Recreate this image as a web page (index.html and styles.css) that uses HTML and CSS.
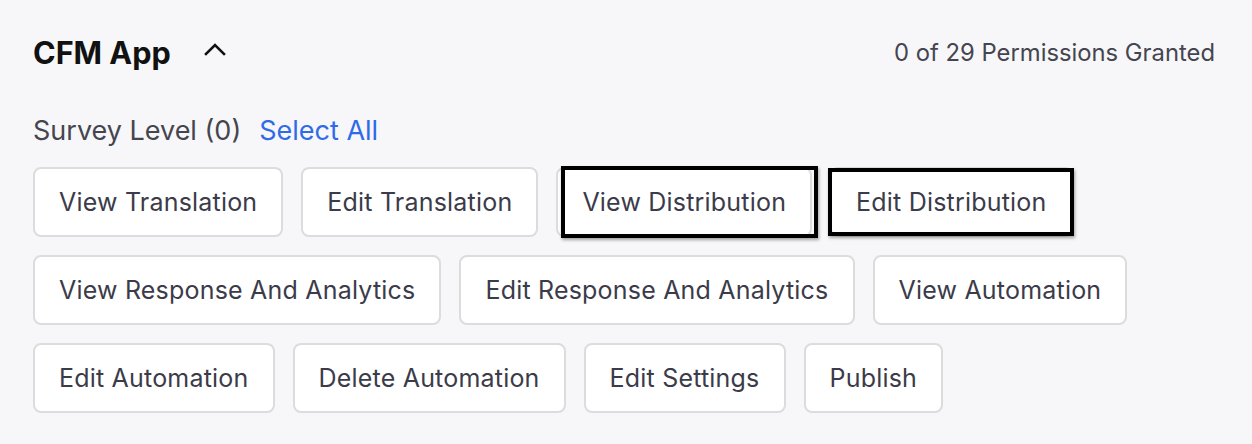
FILE: index.html
```html
<!DOCTYPE html>
<html>
<head>
<meta charset="utf-8">
<link rel="stylesheet" href="styles.css">
</head>
<body>
<section class="panel">
  <header class="panel-head">
    <div class="title-wrap">
      <h2 class="title">CFM App</h2>
      <svg class="chevron" width="24" height="16" viewBox="0 0 24 16"><path d="M3 13 L12 4 L21 13" fill="none" stroke="#111" stroke-width="2.6" stroke-linecap="square"/></svg>
    </div>
    <div class="granted">0 of 29 Permissions Granted</div>
  </header>
  <div class="level">
    <span class="level-label">Survey Level (0)</span>
    <a class="select-all">Select All</a>
  </div>
  <div class="perms">
    <button class="perm">View Translation</button>
    <button class="perm">Edit Translation</button>
    <button class="perm mark mark-a">View Distribution</button>
    <button class="perm mark mark-b">Edit Distribution</button>
    <button class="perm">View Response And Analytics</button>
    <button class="perm">Edit Response And Analytics</button>
    <button class="perm">View Automation</button>
    <button class="perm">Edit Automation</button>
    <button class="perm">Delete Automation</button>
    <button class="perm">Edit Settings</button>
    <button class="perm">Publish</button>
  </div>
</section>
</body>
</html>
```

FILE: styles.css
```css
html, body {
  margin: 0;
  padding: 0;
  background: #f7f7f9;
}
body {
  font-family: Inter, "Noto Sans", sans-serif;
  color: #3b3b4a;
}
.panel {
  padding: 22px 37px 0 33px;
}
.panel-head {
  display: flex;
  align-items: center;
  justify-content: space-between;
  height: 60px;
}
.title-wrap {
  display: flex;
  align-items: center;
  gap: 32px;
}
.title {
  margin: 0;
  font-size: 30.6px;
  font-weight: 700;
  color: #111111;
}
.chevron {
  display: block;
  margin-top: -6px;
}
.granted {
  font-size: 23.8px;
  color: #45454f;
}
.level {
  display: flex;
  align-items: center;
  gap: 18px;
  height: 36px;
  margin-top: 30px;
  font-size: 27px;
}
.level-label {
  color: #45454f;
}
.select-all {
  color: #2f6be8;
  cursor: pointer;
}
.perms {
  display: flex;
  flex-wrap: wrap;
  gap: 18px;
  margin-top: 19px;
  max-width: 1150px;
}
.perm {
  position: relative;
  height: 70px;
  padding: 0 24px;
  background: #ffffff;
  border: 2px solid #dcdcdf;
  border-radius: 8px;
  font-family: inherit;
  font-size: 25px;
  letter-spacing: 0.2px;
  color: #3b3b4a;
  cursor: pointer;
}
.mark::after {
  content: "";
  position: absolute;
  border: 4px solid #000;
  box-shadow: 1px 2px 3px rgba(0, 0, 0, 0.35);
  pointer-events: none;
}
.mark-a::after {
  left: 3px;
  right: -8px;
  top: -3px;
  bottom: -3px;
}
.mark-b::after {
  left: -4px;
  right: -3px;
  top: -1px;
  bottom: -1px;
}
```
